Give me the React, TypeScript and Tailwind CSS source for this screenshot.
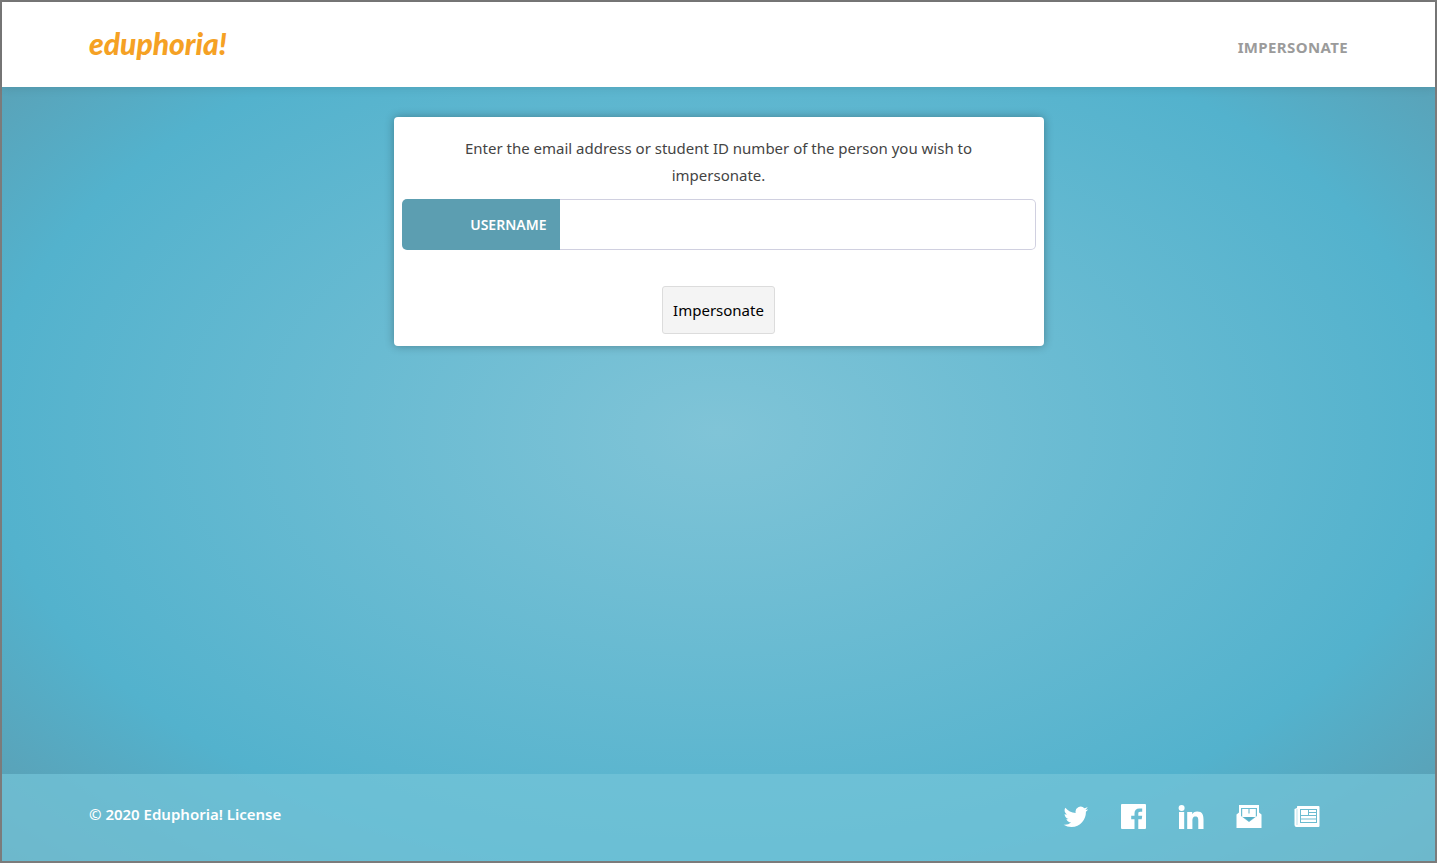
import React, { useState } from 'react'

interface SocialLinkProps {
  label: string
  children: React.ReactNode
}

const SocialLink: React.FC<SocialLinkProps> = ({ label, children }) => (
  <a href="#" aria-label={label} className="block h-[26px] w-[26px] text-white">
    <svg viewBox="0 0 26 26" fill="currentColor" className="h-full w-full" aria-hidden="true">
      {children}
    </svg>
  </a>
)

const Header = () => (
  <header className="flex h-[85px] items-center justify-between bg-white px-[87px] shadow-[0_0_10px_rgba(0,0,0,0.12)]">
    <a href="#" className="pb-1 font-['Lato',sans-serif] text-[30px] leading-8 font-black text-[#f5a124] italic">
      eduphoria!
    </a>
    <nav className="pt-1">
      <a href="#" className="text-[15px] leading-5 font-bold tracking-wide text-[#9b9b9b]">
        IMPERSONATE
      </a>
    </nav>
  </header>
)

const ImpersonateForm = () => {
  const [username, setUsername] = useState('')

  return (
    <form
      onSubmit={(e) => e.preventDefault()}
      className="mx-auto w-full max-w-[650px] rounded bg-white px-2 pt-[18px] pb-3 text-center shadow-[0_0_10px_rgba(0,0,0,0.3)]"
    >
      <p className="px-12 text-[15px] leading-[27px] text-[#444]">
        Enter the email address or student ID number of the person you wish to impersonate.
      </p>
      <div className="mt-[10px] flex h-[51px]">
        <label
          htmlFor="username"
          className="flex w-[158px] items-center justify-end rounded-l-[5px] bg-[#5c9eb1] pr-[13px] text-[14px] font-semibold text-white"
        >
          USERNAME
        </label>
        <input
          id="username"
          type="text"
          value={username}
          onChange={(e) => setUsername(e.target.value)}
          className="min-w-0 flex-1 rounded-r-[5px] border border-l-0 border-[#d0d0e0] bg-white px-3 text-[15px] outline-none"
        />
      </div>
      <button
        type="submit"
        className="mt-9 h-12 rounded-[3px] border border-[#dcdcdc] bg-[#f4f4f4] px-[10px] text-[15px] text-black"
      >
        Impersonate
      </button>
    </form>
  )
}

const Footer = () => (
  <footer className="flex h-[87px] items-center justify-between bg-[#75c5d8]/70 pr-[115px] pl-[87px]">
    <a href="#" className="pb-2 text-[15px] leading-6 font-semibold text-white">
      © 2020 Eduphoria! License
    </a>
    <div className="flex gap-8 pb-0.5">
      <SocialLink label="Twitter">
        <path
          transform="translate(.8 0)"
          d="M25.5 5.1c-.9.4-1.9.7-2.9.8 1-.6 1.8-1.6 2.2-2.800-1 .6-2.100 1-3.200 1.200A5.100 5.100 0 0 0 12.900 9C8.700 8.800 5 6.800 2.500 3.700c-1.400 2.400-.7 5.300 1.600 6.800-.8 0-1.600-.2-2.300-.6 0 2.500 1.700 4.600 4.100 5.100-.7.2-1.500.2-2.300.1.600 2 2.500 3.500 4.700 3.500A10.200 10.200 0 0 1 .8 20.700 14.500 14.500 0 0 0 8.600 23c9.400 0 14.800-7.900 14.500-15.300 1-.7 1.800-1.600 2.400-2.600z"
        />
      </SocialLink>
      <SocialLink label="Facebook">
        <path
          transform="translate(.5 0)"
          d="M1.500 0h23a1 1 0 0 1 1 1v23a1 1 0 0 1-1 1h-6.700v-9.700h3.400l.5-3.500h-3.900V9.500c0-1.100.3-1.800 1.900-1.800h2V4.600c-.4-.1-1.500-.2-2.900-.2-2.900 0-4.800 1.800-4.800 4.800v2.600h-3.300v3.500H14V25H1.500a1 1 0 0 1-1-1V1a1 1 0 0 1 1-1z"
        />
      </SocialLink>
      <SocialLink label="LinkedIn">
        <circle cx="3.600" cy="4" r="3" />
        <path d="M1 8h5.200v17H1zM9.200 8h5v2.300c.7-1.400 2.500-2.700 5-2.700 5.200 0 6.300 3.300 6.300 7.900V25h-5.200v-8c0-2 0-4.400-2.700-4.400s-3.200 2.100-3.200 4.300V25H9.200z" />
      </SocialLink>
      <SocialLink label="Email">
        <path
          fillRule="evenodd"
          d="M3 1h20v7.500l2.500 2V24H.5V10.500l2.500-2zM5 4v8l8 6 8-6V4z"
        />
        <path d="M6.200 5h13.600v8H6.200z" />
        <path d="M12.500 5h1v4.500h-1zM7.500 13h11L13 17z" fill="#58b0c7" />
      </SocialLink>
      <SocialLink label="News">
        <path
          fillRule="evenodd"
          d="M3.500 2h21a1 1 0 0 1 1 1v19a1 1 0 0 1-1 1h-22a2 2 0 0 1-2-2V5L3 4V2.500zM6 5v14h17V5z"
        />
        <path d="M7 6h7v5H7zM15 6h7v2h-7zM15 9h7v2h-7zM7 12h15v2.500H7zM7 15.500h15V18H7z" />
        <path d="M3 5v16" stroke="#a5d6e4" strokeWidth=".7" />
      </SocialLink>
    </div>
  </footer>
)

export default function App() {
  return (
    <div className="flex min-h-screen flex-col border-2 border-[#7b7b7b] bg-[radial-gradient(ellipse_at_center,#80c4d7_0%,#53b2cd_72%,#5d9bae_100%)] font-['Noto_Sans',sans-serif]">
      <Header />
      <main className="flex-1 px-4 py-[30px]">
        <ImpersonateForm />
      </main>
      <Footer />
    </div>
  )
}
